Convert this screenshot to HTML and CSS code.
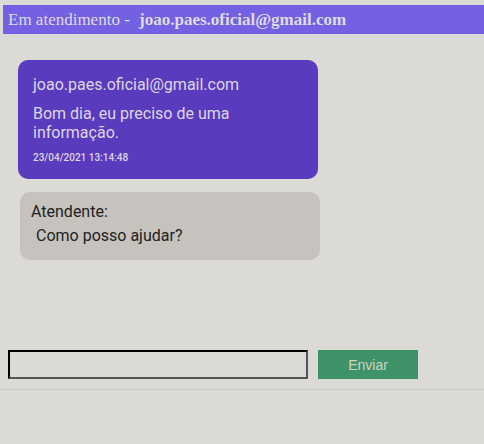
FILE: index.html
```html
<!DOCTYPE html>
<html>
<head>
<meta charset="utf-8">
<link rel="stylesheet" href="styles.css">
</head>
<body>
<div class="page">
  <header class="topbar">Em atendimento - <b class="topbar-email">joao.paes.oficial@gmail.com</b></header>
  <main class="chat">
    <div class="msg msg-user">
      <div class="msg-author">joao.paes.oficial@gmail.com</div>
      <div class="msg-text">Bom dia, eu preciso de uma informação.</div>
      <div class="msg-time">23/04/2021 13:14:48</div>
    </div>
    <div class="msg msg-agent">
      <div class="agent-label">Atendente:</div>
      <div class="agent-text">Como posso ajudar?</div>
    </div>
  </main>
  <form class="composer">
    <input class="composer-input" type="text">
    <button class="composer-btn" type="button">Enviar</button>
  </form>
  <div class="divider"></div>
</div>
</body>
</html>
```
FILE: styles.css
```css
html, body {
  margin: 0;
  padding: 0;
  background: #dbdad6;
  height: 100%;
}
.page {
  padding-top: 5px;
  font-family: Roboto, "Liberation Sans", sans-serif;
}
.topbar {
  margin-left: 3px;
  height: 29px;
  background: #7460e2;
  color: #dddbe0;
  font-family: "Liberation Serif", serif;
  font-size: 17px;
  line-height: 30px;
  padding-left: 5px;
  white-space: nowrap;
}
.topbar-email {
  margin-left: 5px;
}
.chat {
  height: 316px;
  display: flex;
  flex-direction: column;
  align-items: flex-start;
  padding-top: 26px;
  box-sizing: border-box;
}
.msg {
  width: 300px;
  box-sizing: border-box;
  border-radius: 10px;
}
.msg-user {
  margin-left: 18px;
  background: #5a3abd;
  color: #dcd7e6;
  padding: 15px 15px 15px 15px;
  height: 119px;
}
.msg-author {
  font-size: 16px;
  line-height: 19px;
}
.msg-text {
  font-size: 16px;
  line-height: 19px;
  margin-top: 10px;
}
.msg-time {
  font-size: 10px;
  font-weight: 500;
  line-height: 12px;
  margin-top: 10px;
}
.msg-agent {
  margin-left: 20px;
  margin-top: 13px;
  background: #c6c3be;
  color: #222;
  padding: 10px 11px;
  height: 68px;
}
.agent-label {
  font-size: 16px;
  line-height: 19px;
}
.agent-text {
  font-size: 16px;
  line-height: 19px;
  margin-top: 5px;
  padding-left: 5px;
}
.composer {
  display: flex;
  gap: 10px;
  margin: 0 0 0 8px;
  height: 29px;
}
.composer-input {
  width: 300px;
  height: 29px;
  box-sizing: border-box;
  margin: 0;
  background: transparent;
  border: 2px solid;
  border-color: #000 #555 #555 #000;
  padding: 0 4px;
}
.composer-btn {
  width: 100px;
  height: 29px;
  margin: 0;
  border: none;
  background: #3e9468;
  color: #d2d0c8;
  font-family: "Liberation Sans", Arial, sans-serif;
  font-size: 14px;
}
.divider {
  margin-top: 10px;
  border-top: 1px solid #cbc9c5;
}
```
